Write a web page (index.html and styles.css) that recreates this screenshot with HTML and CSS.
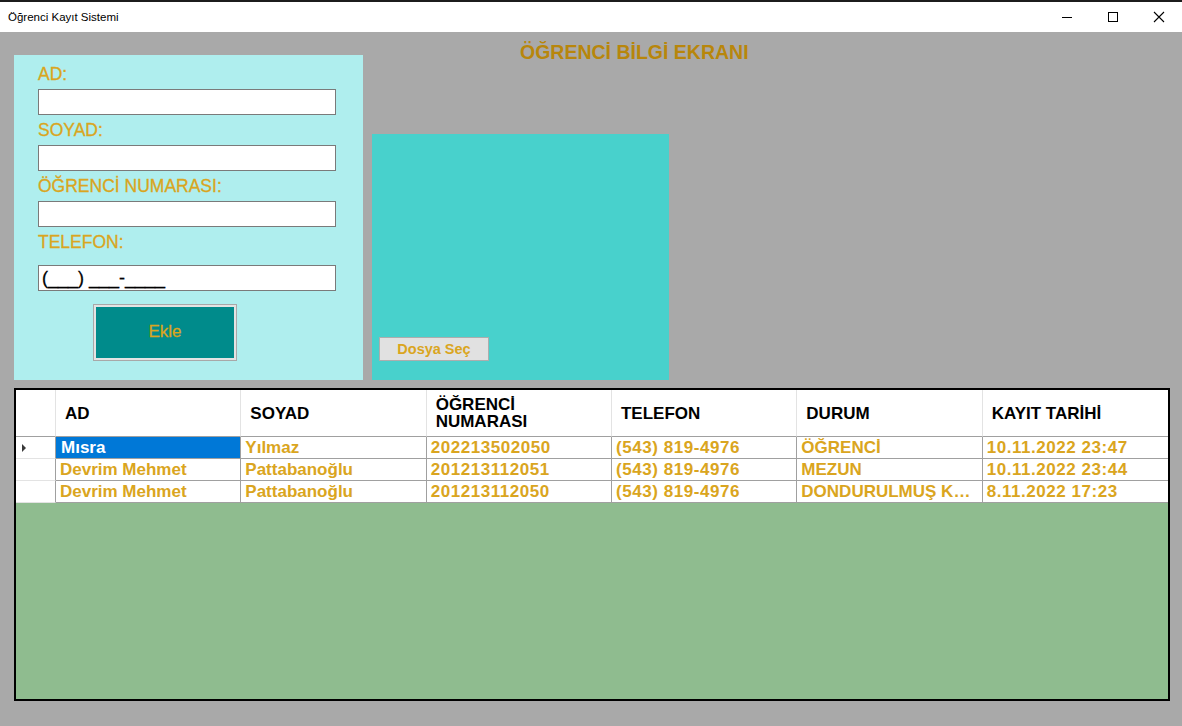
FILE: index.html
```html
<!DOCTYPE html>
<html lang="tr">
<head>
<meta charset="utf-8">
<title>Öğrenci Kayıt Sistemi</title>
<link rel="stylesheet" href="styles.css">
</head>
<body>
<div class="topstrip"></div>
<div class="titlebar">
  <span class="wtitle">Öğrenci Kayıt Sistemi</span>
  <div class="wbtns">
    <span class="wbtn"><svg width="12" height="12" viewBox="0 0 12 12"><path d="M1 6.5h10" stroke="#000" stroke-width="1"/></svg></span>
    <span class="wbtn"><svg width="12" height="12" viewBox="0 0 12 12"><rect x="1.5" y="1.5" width="9" height="9" fill="none" stroke="#000" stroke-width="1"/></svg></span>
    <span class="wbtn"><svg width="12" height="12" viewBox="0 0 12 12"><path d="M1 1L11 11M11 1L1 11" stroke="#000" stroke-width="1.1"/></svg></span>
  </div>
</div>
<div class="client">
  <div class="top">
    <div class="form-panel">
      <div class="lbl">AD:</div>
      <div class="tb"></div>
      <div class="lbl">SOYAD:</div>
      <div class="tb"></div>
      <div class="lbl">ÖĞRENCİ NUMARASI:</div>
      <div class="tb"></div>
      <div class="lbl lbl-tel">TELEFON:</div>
      <div class="tb tb-mask">(___) ___-____</div>
      <div class="ekle">Ekle</div>
    </div>
    <div class="right">
      <div class="heading">ÖĞRENCİ BİLGİ EKRANI</div>
      <div class="pic">
        <div class="dosya">Dosya Seç</div>
      </div>
    </div>
  </div>
  <div class="grid">
    <div class="grow ghead">
      <div class="rh"></div>
      <div class="hc">AD</div>
      <div class="hc">SOYAD</div>
      <div class="hc">ÖĞRENCİ<br>NUMARASI</div>
      <div class="hc">TELEFON</div>
      <div class="hc">DURUM</div>
      <div class="hc">KAYIT TARİHİ</div>
    </div>
    <div class="grow">
      <div class="rh"><span class="arrow"></span></div>
      <div class="dc sel">Mısra</div>
      <div class="dc">Yılmaz</div>
      <div class="dc num">202213502050</div>
      <div class="dc num">(543) 819-4976</div>
      <div class="dc">ÖĞRENCİ</div>
      <div class="dc num">10.11.2022 23:47</div>
    </div>
    <div class="grow">
      <div class="rh"></div>
      <div class="dc">Devrim Mehmet</div>
      <div class="dc">Pattabanoğlu</div>
      <div class="dc num">201213112051</div>
      <div class="dc num">(543) 819-4976</div>
      <div class="dc">MEZUN</div>
      <div class="dc num">10.11.2022 23:44</div>
    </div>
    <div class="grow">
      <div class="rh"></div>
      <div class="dc">Devrim Mehmet</div>
      <div class="dc">Pattabanoğlu</div>
      <div class="dc num">201213112050</div>
      <div class="dc num">(543) 819-4976</div>
      <div class="dc">DONDURULMUŞ KAYIT</div>
      <div class="dc num">8.11.2022 17:23</div>
    </div>
  </div>
</div>
</body>
</html>
```
FILE: styles.css
```css
* { box-sizing: border-box; }
html, body { margin: 0; padding: 0; }
body {
  background: #A9A9A9;
  font-family: "Liberation Sans", Arial, sans-serif;
  width: 1182px;
  height: 726px;
  overflow: hidden;
}
.topstrip { height: 2px; background: #1c1c1c; }
.titlebar {
  height: 30px;
  background: #fff;
  display: flex;
  align-items: center;
  justify-content: space-between;
}
.wtitle {
  font-size: 11.5px;
  color: #000;
  padding-left: 8px;
  padding-bottom: 1px;
}
.wbtns { display: flex; height: 30px; }
.wbtn {
  width: 46px;
  height: 30px;
  display: flex;
  align-items: center;
  justify-content: center;
}
.client { padding: 10px 12px 0 14px; }
.top { display: flex; align-items: flex-start; }
.form-panel {
  margin-top: 13px;
  width: 349px;
  height: 325px;
  background: #AFEEEE;
  padding: 9px 0 0 24px;
  display: flex;
  flex-direction: column;
  align-items: flex-start;
}
.lbl {
  color: #DAA520;
  font-size: 17.5px;
  line-height: 20px;
  height: 20px;
  margin-bottom: 5px;
  -webkit-text-stroke: 0.3px #DAA520;
}
.tb {
  width: 298px;
  height: 26px;
  background: #fff;
  border: 1px solid #7A7A7A;
  margin-bottom: 5px;
}
.lbl-tel { margin-bottom: 13px; }
.tb-mask {
  font-size: 18px;
  line-height: 24px;
  color: #000;
  padding-left: 3px;
  margin-bottom: 13px;
  white-space: pre;
  -webkit-text-stroke: 0.3px #000;
}
.ekle {
  margin-left: 55px;
  width: 144px;
  height: 57px;
  background: #008B8B;
  border: 1px solid #A8A8A8;
  box-shadow: inset 0 0 0 2px #E3E3E3;
  color: #DAA520;
  font-size: 17px;
  display: flex;
  align-items: center;
  justify-content: center;
  padding-bottom: 2px;
  -webkit-text-stroke: 0.3px #DAA520;
}
.right { margin-left: 9px; display: flex; flex-direction: column; }
.heading {
  margin-left: 148px;
  color: #B8860B;
  font-weight: bold;
  font-size: 19.5px;
  line-height: 20px;
  height: 20px;
}
.pic {
  margin-top: 72px;
  width: 297px;
  height: 246px;
  background: #48D1CC;
  display: flex;
  flex-direction: column;
  justify-content: flex-end;
  align-items: flex-start;
  padding: 0 0 19px 7px;
}
.dosya {
  width: 110px;
  height: 24px;
  background: #E1E1E1;
  border: 1px solid #ADADAD;
  color: #DAA520;
  font-weight: bold;
  font-size: 14.5px;
  display: flex;
  align-items: center;
  justify-content: center;
}
.grid {
  margin-top: 8px;
  width: 1156px;
  height: 313px;
  border: 2px solid #000;
  background: #8FBC8F;
}
.grow {
  display: grid;
  grid-template-columns: 40px repeat(6, 1fr);
  height: 22px;
  background: #fff;
}
.ghead { height: 47px; }
.rh {
  border-right: 1px solid #A0A0A0;
  border-bottom: 1px solid #E3E3E3;
  display: flex;
  align-items: center;
  padding-left: 6px;
}
.ghead .rh { border-bottom: 1px solid #A0A0A0; border-right: 1px solid #E3E3E3; }
.arrow {
  width: 0; height: 0;
  border-left: 4px solid #3a3a3a;
  border-top: 4px solid transparent;
  border-bottom: 4px solid transparent;
}
.hc {
  border-right: 1px solid #E3E3E3;
  border-bottom: 1px solid #A0A0A0;
  font-weight: bold;
  font-size: 17px;
  line-height: 17px;
  color: #000;
  padding-left: 9px;
  display: flex;
  align-items: center;
}
.hc:last-child { border-right: none; }
.dc {
  border-right: 1px solid #A0A0A0;
  border-bottom: 1px solid #A0A0A0;
  font-weight: bold;
  font-size: 17px;
  line-height: 21px;
  color: #DAA520;
  padding: 0 4px 0 4px;
  white-space: nowrap;
  overflow: hidden;
  text-overflow: ellipsis;
}
.dc.num { letter-spacing: 0.55px; }
.dc:last-child { border-right: none; }
.dc.sel {
  background: #0078D7;
  color: #fff;
  padding-left: 5px;
}
```
